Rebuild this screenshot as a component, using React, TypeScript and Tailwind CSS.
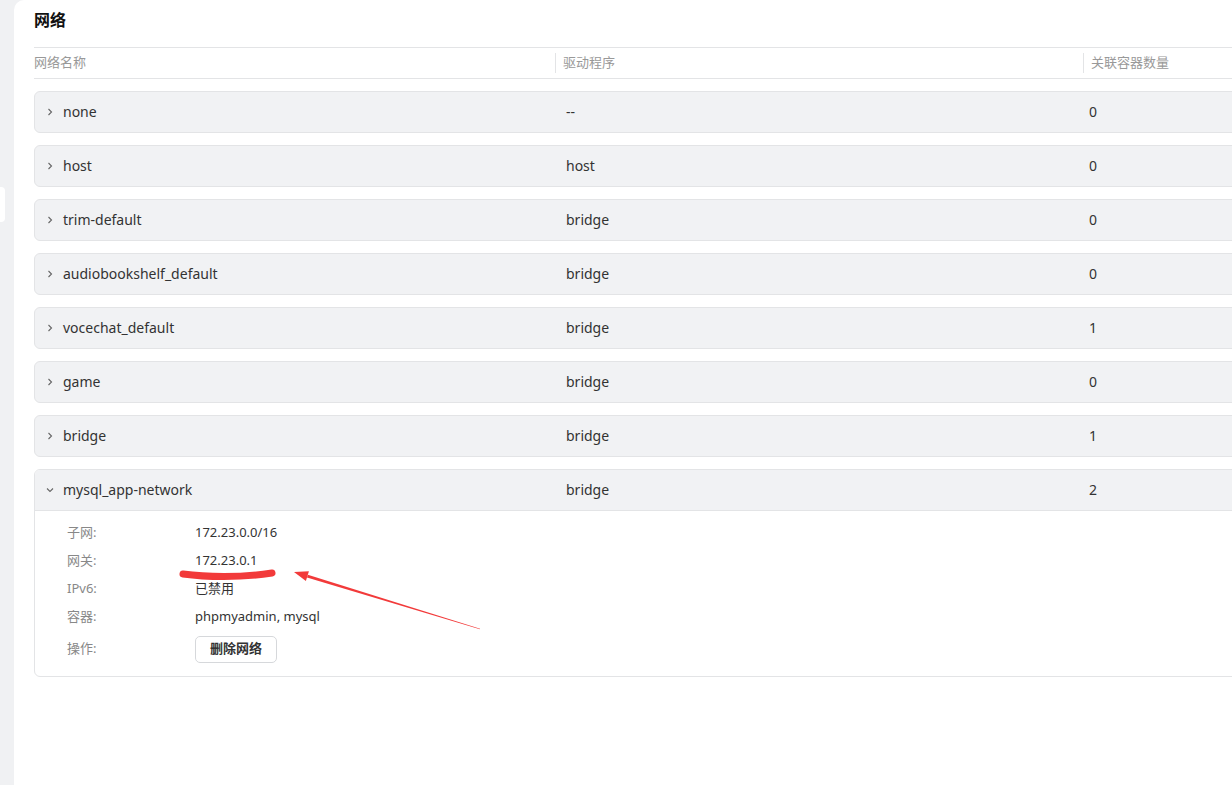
import React from 'react';

const font = { fontFamily: '"Noto Sans", "Noto Sans CJK SC", sans-serif' };

interface Net {
  name: string;
  driver: string;
  count: number;
}

const networks: Net[] = [
  { name: 'none', driver: '--', count: 0 },
  { name: 'host', driver: 'host', count: 0 },
  { name: 'trim-default', driver: 'bridge', count: 0 },
  { name: 'audiobookshelf_default', driver: 'bridge', count: 0 },
  { name: 'vocechat_default', driver: 'bridge', count: 1 },
  { name: 'game', driver: 'bridge', count: 0 },
  { name: 'bridge', driver: 'bridge', count: 1 },
];

const Chevron = ({ open }: { open?: boolean }) => (
  <svg width="10" height="10" viewBox="0 0 10 10" className="shrink-0 mt-[2px]">
    {open ? (
      <path d="M2 3.5 L5 6.5 L8 3.5" fill="none" stroke="#666" strokeWidth="1.1" />
    ) : (
      <path d="M3.5 2 L6.5 5 L3.5 8" fill="none" stroke="#666" strokeWidth="1.1" />
    )}
  </svg>
);

const RowHead = ({ net, open }: { net: Net; open?: boolean }) => (
  <div className="flex items-center h-[40px] pb-[2px] text-[14px] text-[#333]">
    <div className="w-[531px] flex items-center pl-[10px] gap-[8px]">
      <Chevron open={open} />
      <span>{net.name}</span>
    </div>
    <div className="w-[523px]">{net.driver}</div>
    <div>{net.count}</div>
  </div>
);

const Detail = ({ label, children, tall }: { label: string; children: React.ReactNode; tall?: boolean }) => (
  <div className={`flex items-center ${tall ? 'h-[36px]' : 'h-[28px]'} text-[13px]`}>
    <div className="w-[128px] text-[#888]">{label}</div>
    <div className="text-[#333]">{children}</div>
  </div>
);

export default function App() {
  const expanded: Net = { name: 'mysql_app-network', driver: 'bridge', count: 2 };
  return (
    <div className="relative w-[1232px] h-[785px] overflow-hidden bg-[#f0f1f3] flex" style={font}>
      <div className="w-[14px] shrink-0 pt-[187px]">
        <div className="w-[5px] h-[35px] bg-white rounded-r-[4px]" />
      </div>
      <div className="flex-1 bg-white rounded-tl-[10px] pl-[20px] pt-[8px]">
        <h1 className="text-[16px] font-bold text-[#111] leading-[24px]">网络</h1>
        <div className="w-[1240px] mt-[15px] border-t border-b border-[#e3e4e6] h-[32px] flex items-center text-[13px] text-[#999]">
          <div className="w-[521px]">网络名称</div>
          <div className="w-[528px] flex items-center">
            <span className="w-px h-[20px] bg-[#e3e4e6] mr-[7px]" />
            驱动程序
          </div>
          <div className="flex items-center">
            <span className="w-px h-[20px] bg-[#e3e4e6] mr-[7px]" />
            关联容器数量
          </div>
        </div>
        <div className="w-[1240px] mt-[12px] flex flex-col gap-[12px]">
          {networks.map((n) => (
            <div key={n.name} className="rounded-[6px] border border-[#e3e4e6] bg-[#f1f2f4]">
              <RowHead net={n} />
            </div>
          ))}
          <div className="rounded-[6px] border border-[#e3e4e6] overflow-hidden">
            <div className="bg-[#f1f2f4] border-b border-[#e3e4e6]">
              <RowHead net={expanded} open />
            </div>
            <div className="pl-[32px] pt-[8px] pb-[9px]">
              <Detail label="子网:">172.23.0.0/16</Detail>
              <Detail label="网关:">172.23.0.1</Detail>
              <Detail label="IPv6:">已禁用</Detail>
              <Detail label="容器:">phpmyadmin, mysql</Detail>
              <Detail label="操作:" tall>
                <button className="h-[27px] px-[14px] rounded-[5px] border border-[#d6d8db] bg-white text-[13px] font-bold text-[#333]">
                  删除网络
                </button>
              </Detail>
            </div>
          </div>
        </div>
      </div>
      <svg className="absolute left-0 top-0 pointer-events-none" width="1232" height="785">
        <path
          d="M183 574 C 205 577, 240 578, 272 573"
          fill="none"
          stroke="#f23a3a"
          strokeWidth="7"
          strokeLinecap="round"
        />
        <polygon points="306.96,577.5 307.84,574.66 480.1,628.7 479.9,629.3" fill="#f23a3a" />
        <polygon points="294,572 308.9,571.3 305.9,580.9" fill="#f23a3a" />
      </svg>
    </div>
  );
}
